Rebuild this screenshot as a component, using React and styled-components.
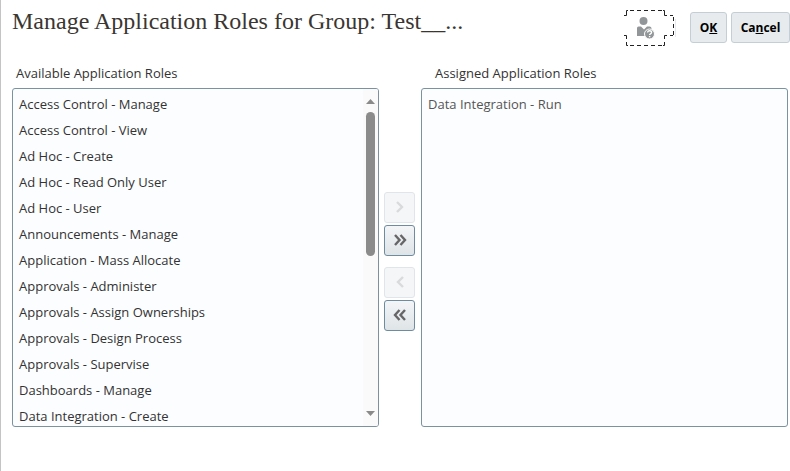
import React from "react";
import styled, { createGlobalStyle } from "styled-components";

const GlobalStyle = createGlobalStyle`
  * { box-sizing: border-box; }
  body {
    margin: 0;
    background: #fff;
    color: #333;
    font-family: "Segoe UI", "Open Sans", "Noto Sans", sans-serif;
    font-size: 13px;
  }
`;

const Page = styled.main`
  min-height: 100vh;
  border-left: 1px solid #c4c4c4;
  padding: 0 0 24px 11px;
`;

const Header = styled.header`
  display: flex;
  align-items: flex-start;
  height: 64px;
`;

const Title = styled.h1`
  flex: 1;
  min-width: 0;
  margin: 6px 0 0;
  color: #3a3631;
  font: 400 24px/30px Georgia, "Liberation Serif", serif;
  white-space: nowrap;
  overflow: hidden;
  text-overflow: ellipsis;
`;

const HelpButton = styled.button`
  width: 52px;
  height: 38px;
  margin: 9px 14px 0 0;
  padding: 0;
  border: 0;
  background: none;
  svg { display: block; }
`;

const Actions = styled.div`
  display: flex;
  gap: 4px;
  margin-top: 12px;
`;

const ActionButton = styled.button`
  height: 31px;
  padding: 0 8px;
  min-width: ${(p) => (p.$wide ? 59 : 37)}px;
  border: 1px solid #c4ced7;
  border-radius: 3px;
  background: #e7ebed;
  color: #000;
  font: 700 12px/29px "Segoe UI", "Open Sans", "Noto Sans", sans-serif;
`;

const Shuttle = styled.section`
  display: grid;
  grid-template-columns: 1fr 42px 1fr;
  padding-right: 2px;
`;

const Column = styled.div`
  min-width: 0;
`;

const Label = styled.label`
  display: block;
  height: 24px;
  padding-left: ${(p) => p.$indent}px;
  color: #333;
  line-height: 18px;
`;

const ListFrame = styled.div`
  display: flex;
  height: 339px;
  border: 1px solid #7a939f;
  border-radius: 3px;
  background: #fcfdff;
  overflow: hidden;
`;

const RoleList = styled.select`
  flex: 1;
  min-width: 0;
  height: 100%;
  margin: 0;
  padding: 2px 0 0;
  border: 0;
  outline: 0;
  background: transparent;
  color: ${(p) => p.$tone};
  font: 400 13px/18px "Segoe UI", "Open Sans", "Noto Sans", sans-serif;
  overflow: hidden;
  option {
    height: 26px;
    min-height: 26px;
    padding: 4px 6px;
    line-height: 18px;
  }
`;

const ScrollTrack = styled.div`
  display: flex;
  flex-direction: column;
  align-items: center;
  width: 15px;
  padding: 10px 0;
  background: #fafafa;
`;

const ScrollArrow = styled.svg`
  display: block;
  width: 9px;
  height: 5px;
  fill: #8a8a8a;
`;

const ScrollThumb = styled.div`
  width: 9px;
  height: 144px;
  margin: 8px 0 auto;
  border-radius: 5px;
  background: #8b8b8b;
`;

const Movers = styled.div`
  display: flex;
  flex-direction: column;
  align-items: center;
  gap: 11px;
  padding: 128px 1px 0 0;
`;

const MoverPair = styled.div`
  display: grid;
  gap: 2px;
`;

const MoveButton = styled.button`
  display: grid;
  place-items: center;
  width: 31px;
  height: 31px;
  padding: 0 0 2px;
  border: 1px solid #6f8ba0;
  border-radius: 3px;
  background: linear-gradient(#f3f5f7, #dfe4e7);
  color: #666668;
  &:disabled {
    border-color: #e0e5ea;
    background: #f5f6f8;
    color: #d9dadc;
  }
`;

const AVAILABLE = [
  "Access Control - Manage",
  "Access Control - View",
  "Ad Hoc - Create",
  "Ad Hoc - Read Only User",
  "Ad Hoc - User",
  "Announcements - Manage",
  "Application - Mass Allocate",
  "Approvals - Administer",
  "Approvals - Assign Ownerships",
  "Approvals - Design Process",
  "Approvals - Supervise",
  "Dashboards - Manage",
  "Data Integration - Create",
];

const ASSIGNED = ["Data Integration - Run"];

const CHEVRONS = {
  right: "M4 2 L9 7 L4 12",
  allRight: "M2 2 L6.500 7 L2 12 M7.500 2 L12 7 L7.500 12",
  left: "M10 2 L5 7 L10 12",
  allLeft: "M6.500 2 L2 7 L6.500 12 M12 2 L7.500 7 L12 12",
};

function Mover({ kind, label, disabled }) {
  return (
    <MoveButton type="button" aria-label={label} disabled={disabled}>
      <svg width="14" height="14" viewBox="0 0 14 14" fill="none" stroke="currentColor" strokeWidth="2.400">
        <path d={CHEVRONS[kind]} />
      </svg>
    </MoveButton>
  );
}

function HelpIcon() {
  return (
    <svg width="52" height="38" viewBox="0 0 52 38" aria-hidden="true">
      <g fill="none" stroke="#222" strokeWidth="1" strokeDasharray="4 3">
        <path d="M6 1.500H38" />
        <path d="M6 36.500H38" />
        <path d="M49.500 8V26" />
      </g>
      <g fill="none" stroke="#222">
        <path d="M0 6.500H2.500V1.500H4M43 6.500H40.500V1.500H39" />
        <path d="M0 26.500H2.500V30M43 26.500H40.500V30M2.500 33V36.500H4M40.500 33V36.500H39" />
        <path d="M46 6.500H49M46 26.500H49" />
      </g>
      <path d="M51.500 10V28" stroke="#e4ebef" />
      <g fill="#939698">
        <circle cx="19.500" cy="12" r="4" />
        <path d="M13 19q0-1.500 1.500-1.500h2.500l3 3 3-3h2.500q2 0 2 2v7.500H13z" />
      </g>
      <circle cx="25.500" cy="25" r="5" fill="#939698" stroke="#fff" />
      <path d="M23.500 23.500q.2-1.800 2.100-1.800 2 0 2 1.600 0 1-1.100 1.500-.9.400-.9 1.200M25.600 27v1.300" fill="none" stroke="#fff" strokeWidth="1.400" />
    </svg>
  );
}

function Roles({ id, label, indent, roles, tone, scrollable }) {
  return (
    <Column>
      <Label htmlFor={id} $indent={indent}>{label}</Label>
      <ListFrame>
        <RoleList id={id} multiple $tone={tone}>
          {roles.map((role) => (
            <option key={role}>{role}</option>
          ))}
        </RoleList>
        {scrollable && (
          <ScrollTrack aria-hidden="true">
            <ScrollArrow viewBox="0 0 9 5"><path d="M0 5L4.500 0L9 5z" /></ScrollArrow>
            <ScrollThumb />
            <ScrollArrow viewBox="0 0 9 5"><path d="M0 0L4.500 5L9 0z" /></ScrollArrow>
          </ScrollTrack>
        )}
      </ListFrame>
    </Column>
  );
}

export default function App() {
  return (
    <Page>
      <GlobalStyle />
      <Header>
        <Title>Manage Application Roles for Group: Test__...</Title>
        <HelpButton type="button" aria-label="User help"><HelpIcon /></HelpButton>
        <Actions>
          <ActionButton type="button">O<u>K</u></ActionButton>
          <ActionButton type="button" $wide>Ca<u>n</u>cel</ActionButton>
        </Actions>
      </Header>
      <Shuttle>
        <Roles id="available" label="Available Application Roles" indent={4} roles={AVAILABLE} tone="#333" scrollable />
        <Movers>
          <MoverPair>
            <Mover kind="right" label="Move" disabled />
            <Mover kind="allRight" label="Move all" />
          </MoverPair>
          <MoverPair>
            <Mover kind="left" label="Remove" disabled />
            <Mover kind="allLeft" label="Remove all" />
          </MoverPair>
        </Movers>
        <Roles id="assigned" label="Assigned Application Roles" indent={14} roles={ASSIGNED} tone="#555" />
      </Shuttle>
    </Page>
  );
}
